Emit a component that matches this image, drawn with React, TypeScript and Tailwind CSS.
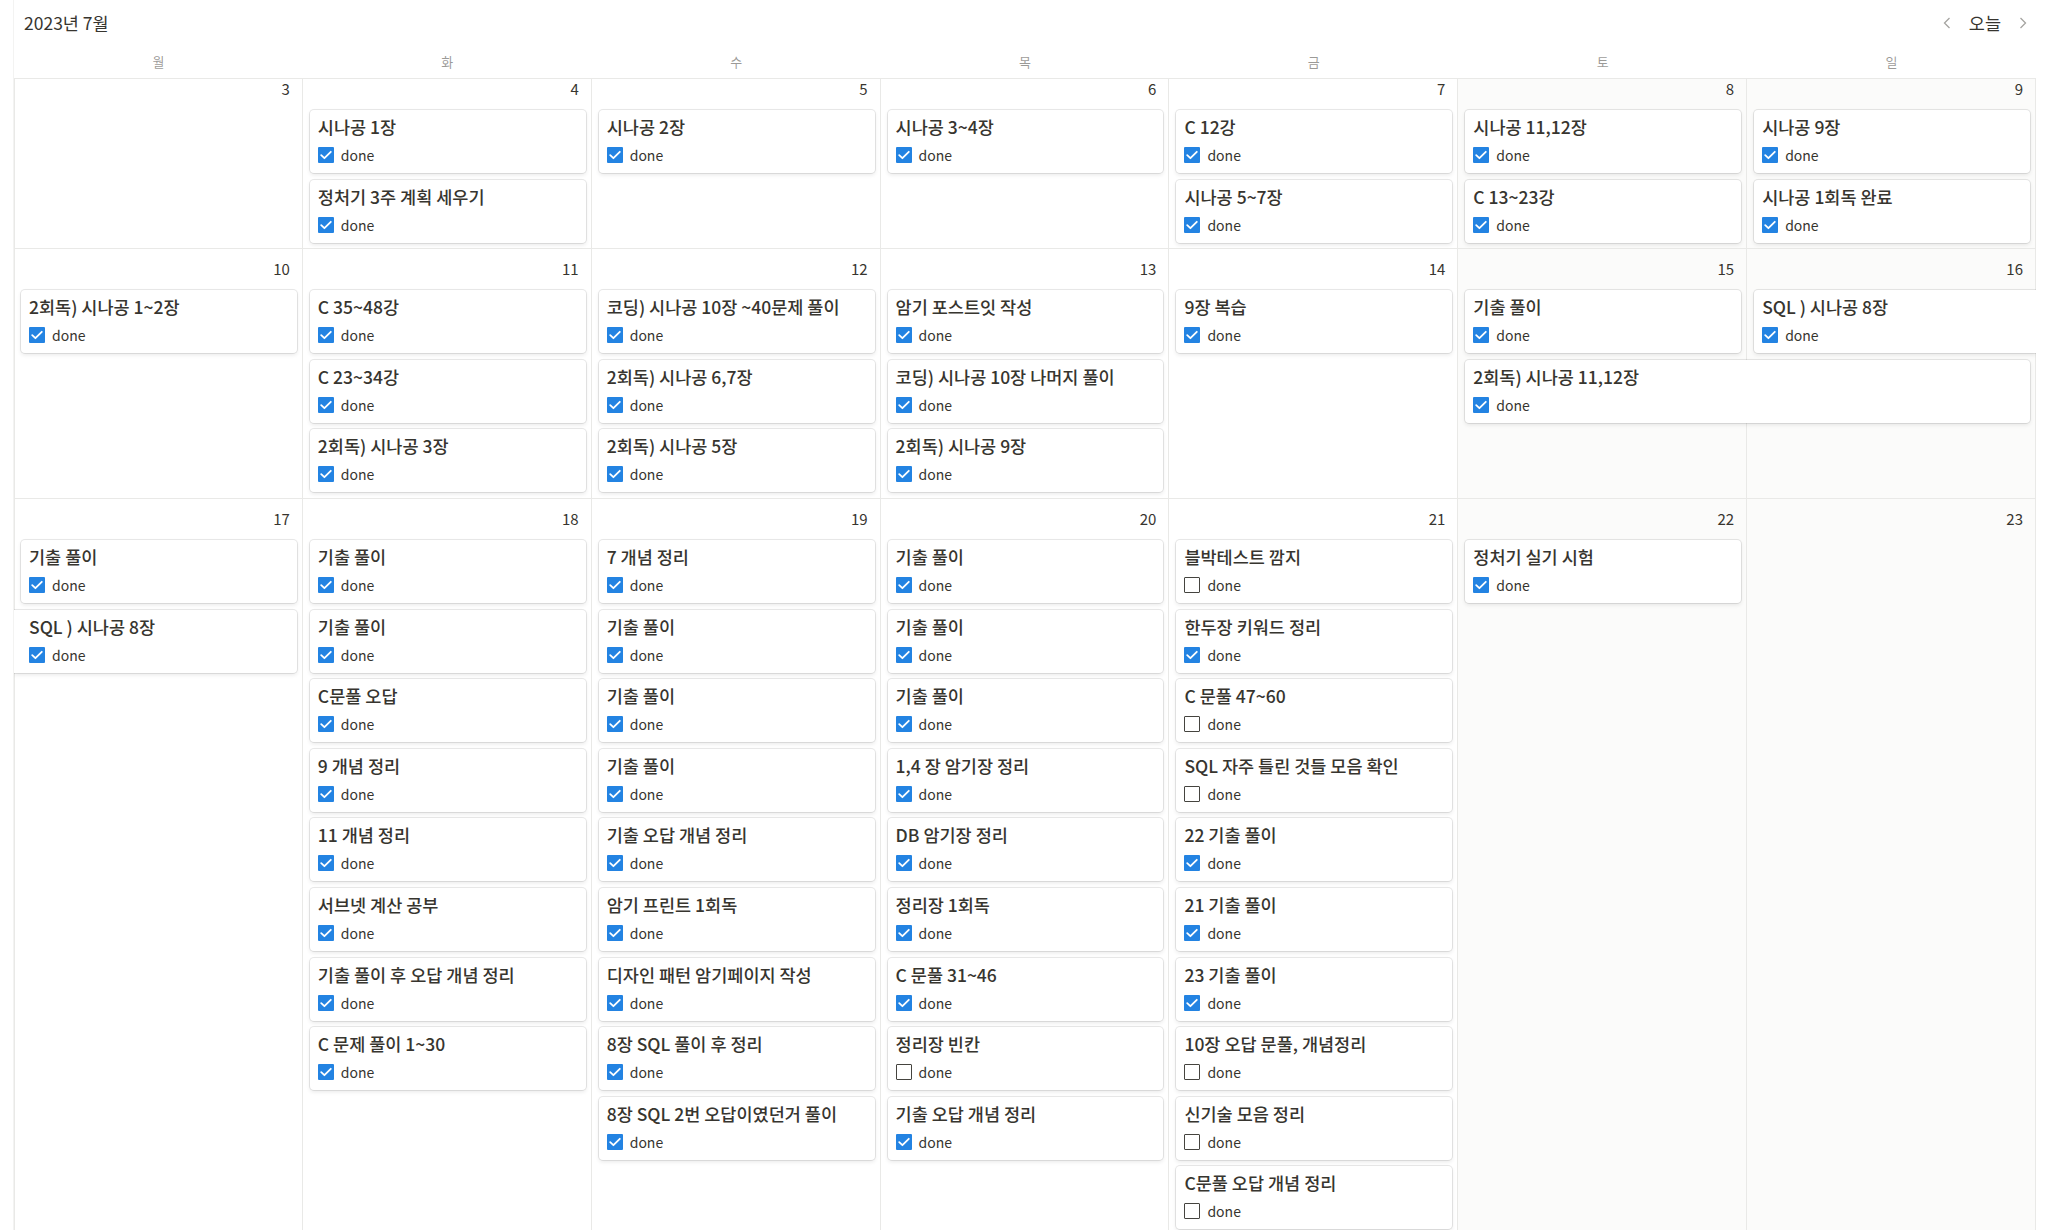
import React from 'react';

type Card = {
  col: number;
  slot: number;
  title: string;
  done: boolean;
  span?: number;
  cut?: 'left' | 'right';
};

type Week = {
  days: number[];
  rows: string;
  shift?: boolean;
  cards: Card[];
};

const colStart = ['', 'col-start-1', 'col-start-2', 'col-start-3', 'col-start-4', 'col-start-5', 'col-start-6', 'col-start-7'];
const rowStart = ['row-start-2', 'row-start-3', 'row-start-4', 'row-start-5', 'row-start-6', 'row-start-7', 'row-start-8', 'row-start-9', 'row-start-10', 'row-start-11'];

// helper: stack a list of titles into one day column
const stack = (col: number, items: [string, boolean][]): Card[] =>
  items.map(([title, done], slot) => ({ col, slot, title, done }));

const weeks: Week[] = [
  {
    days: [3, 4, 5, 6, 7, 8, 9],
    rows: 'grid-rows-[41px_repeat(2,69.6px)]',
    shift: true,
    cards: [
      ...stack(2, [['시나공 1장', true], ['정처기 3주 계획 세우기', true]]),
      ...stack(3, [['시나공 2장', true]]),
      ...stack(4, [['시나공 3~4장', true]]),
      ...stack(5, [['C 12강', true], ['시나공 5~7장', true]]),
      ...stack(6, [['시나공 11,12장', true], ['C 13~23강', true]]),
      ...stack(7, [['시나공 9장', true], ['시나공 1회독 완료', true]]),
    ],
  },
  {
    days: [10, 11, 12, 13, 14, 15, 16],
    rows: 'grid-rows-[41px_repeat(3,69.6px)]',
    cards: [
      ...stack(1, [['2회독) 시나공 1~2장', true]]),
      ...stack(2, [['C 35~48강', true], ['C 23~34강', true], ['2회독) 시나공 3장', true]]),
      ...stack(3, [['코딩) 시나공 10장 ~40문제 풀이', true], ['2회독) 시나공 6,7장', true], ['2회독) 시나공 5장', true]]),
      ...stack(4, [['암기 포스트잇 작성', true], ['코딩) 시나공 10장 나머지 풀이', true], ['2회독) 시나공 9장', true]]),
      ...stack(5, [['9장 복습', true]]),
      { col: 6, slot: 0, title: '기출 풀이', done: true },
      { col: 6, slot: 1, title: '2회독) 시나공 11,12장', done: true, span: 2 },
      { col: 7, slot: 0, title: 'SQL ) 시나공 8장', done: true, cut: 'right' },
    ],
  },
  {
    days: [17, 18, 19, 20, 21, 22, 23],
    rows: 'grid-rows-[41px_repeat(10,69.6px)]',
    cards: [
      { col: 1, slot: 0, title: '기출 풀이', done: true },
      { col: 1, slot: 1, title: 'SQL ) 시나공 8장', done: true, cut: 'left' },
      ...stack(2, [
        ['기출 풀이', true],
        ['기출 풀이', true],
        ['C문풀 오답', true],
        ['9 개념 정리', true],
        ['11 개념 정리', true],
        ['서브넷 계산 공부', true],
        ['기출 풀이 후 오답 개념 정리', true],
        ['C 문제 풀이 1~30', true],
      ]),
      ...stack(3, [
        ['7 개념 정리', true],
        ['기출 풀이', true],
        ['기출 풀이', true],
        ['기출 풀이', true],
        ['기출 오답 개념 정리', true],
        ['암기 프린트 1회독', true],
        ['디자인 패턴 암기페이지 작성', true],
        ['8장 SQL 풀이 후 정리', true],
        ['8장 SQL 2번 오답이였던거 풀이', true],
      ]),
      ...stack(4, [
        ['기출 풀이', true],
        ['기출 풀이', true],
        ['기출 풀이', true],
        ['1,4 장 암기장 정리', true],
        ['DB 암기장 정리', true],
        ['정리장 1회독', true],
        ['C 문풀 31~46', true],
        ['정리장 빈칸', false],
        ['기출 오답 개념 정리', true],
      ]),
      ...stack(5, [
        ['블박테스트 깜지', false],
        ['한두장 키워드 정리', true],
        ['C 문풀 47~60', false],
        ['SQL 자주 틀린 것들 모음 확인', false],
        ['22 기출 풀이', true],
        ['21 기출 풀이', true],
        ['23 기출 풀이', true],
        ['10장 오답 문풀, 개념정리', false],
        ['신기술 모음 정리', false],
        ['C문풀 오답 개념 정리', false],
      ]),
      ...stack(6, [['정처기 실기 시험', true]]),
    ],
  },
];

const dayNames = ['월', '화', '수', '목', '금', '토', '일'];

const Checkbox = ({ checked }: { checked: boolean }) =>
  checked ? (
    <svg width="16" height="16" viewBox="0 0 16 16" className="shrink-0">
      <rect width="16" height="16" rx="1" fill="#2383e2" />
      <path d="M3.2 8.2 L6.4 11.2 L12.8 4.8" fill="none" stroke="#fff" strokeWidth="1.8" strokeLinecap="round" strokeLinejoin="round" />
    </svg>
  ) : (
    <div className="w-4 h-4 shrink-0 border-[1.5px] border-[#45443f] rounded-[1px]" />
  );

const EventCard = ({ card }: { card: Card }) => {
  const margin =
    card.cut === 'right'
      ? 'ml-[7px] mr-0 rounded-l-[4px]'
      : card.cut === 'left'
        ? 'ml-0 mr-[6px] rounded-r-[4px] pl-[15px]'
        : 'ml-[7px] mr-[6px] rounded-[4px]';
  return (
    <div
      className={`${colStart[card.col]} ${rowStart[card.slot]} ${card.span === 2 ? 'col-span-2' : ''} ${margin} z-10 h-[63px] bg-white px-[8px] pt-[4px] shadow-[0_0_0_1px_rgba(15,15,15,0.09),0_2px_4px_rgba(15,15,15,0.09)] flex flex-col min-w-0`}
    >
      <div className="text-[17.5px] leading-[26px] font-medium text-[#37352f] whitespace-nowrap">{card.title}</div>
      <div className="mt-[5px] h-[20px] flex items-center gap-[7px]">
        <Checkbox checked={card.done} />
        <span className="text-[14px] leading-[20px] text-[#37352f]">done</span>
      </div>
    </div>
  );
};

const WeekRow = ({ week }: { week: Week }) => (
  <div className={`grid grid-cols-7 ${week.rows} ${week.shift ? '-mt-[10px]' : ''}`}>
    {week.days.map((d, i) => (
      <div
        key={d}
        className={`${colStart[i + 1]} row-span-full border-r border-b border-[#e9e9e7] ${i === 0 ? 'border-l' : ''} ${i >= 5 ? 'bg-[#fbfbfa]' : 'bg-white'}`}
      >
        <div className="h-[41px] flex items-center justify-end pr-[12px] text-[15px] text-[#37352f]">{d}</div>
      </div>
    ))}
    {week.cards.map((c, i) => (
      <EventCard key={i} card={c} />
    ))}
  </div>
);

export default function App() {
  return (
    <div
      className="h-screen w-full overflow-hidden bg-white text-[#37352f]"
      style={{ fontFamily: '"Segoe UI", "Noto Sans CJK KR", sans-serif' }}
    >
      <div className="ml-[13px] mr-[21px] border-l border-[#f3f3f2] h-full flex flex-col">
        <div className="h-[46px] shrink-0 flex items-center justify-between pl-[10px]">
          <div className="text-[17.5px] leading-[26px]">2023년 7월</div>
          <div className="flex items-center gap-[18px] pr-[9px]">
            <svg width="8" height="12" viewBox="0 0 8 12">
              <path d="M6.5 1 L1.5 6 L6.5 11" fill="none" stroke="#a5a4a1" strokeWidth="1.3" />
            </svg>
            <span className="text-[17.5px] leading-[26px]">오늘</span>
            <svg width="8" height="12" viewBox="0 0 8 12">
              <path d="M1.5 1 L6.5 6 L1.5 11" fill="none" stroke="#a5a4a1" strokeWidth="1.3" />
            </svg>
          </div>
        </div>
        <div className="h-[33px] shrink-0 grid grid-cols-7 border-b border-[#e9e9e7]">
          {dayNames.map((n) => (
            <div key={n} className="flex items-center justify-center text-[13px] text-[rgba(55,53,47,0.5)]">
              {n}
            </div>
          ))}
        </div>
        <div className="flex-1 overflow-hidden">
          {weeks.map((w, i) => (
            <WeekRow key={i} week={w} />
          ))}
        </div>
      </div>
    </div>
  );
}
